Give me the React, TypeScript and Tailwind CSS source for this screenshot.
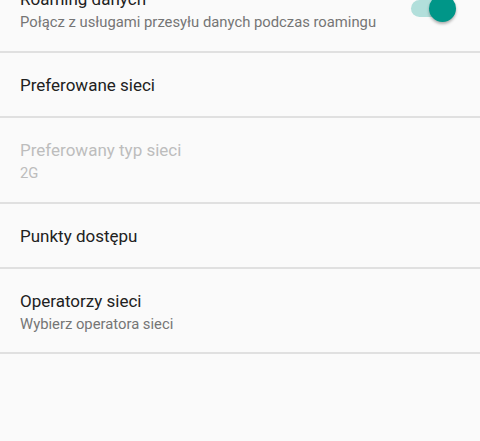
export default function App() {
  const Divider = () => <div className="h-[2px] bg-[#e0e0e0]" />;
  return (
    <div className="w-[480px] h-[441px] overflow-hidden bg-[#fafafa]" style={{ fontFamily: "Roboto, sans-serif" }}>
      <div className="-mt-[33px]">
        <div className="h-[84px] flex items-start pl-5 pr-6">
          <div className="flex-1 h-full flex flex-col justify-center pt-[3px]">
            <div className="text-[17px] leading-[22px] text-[#212121]">Roaming danych</div>
            <div className="mt-[1px] text-[14.8px] leading-[22px] text-[#757575]">Połącz z usługami przesyłu danych podczas roamingu</div>
          </div>
          <div className="relative w-[46px] h-[28px] mt-[28px]">
            <div className="absolute left-[1px] top-[5px] w-[40px] h-[17px] rounded-full bg-[#b2dfdb]" />
            <div className="absolute left-[19px] top-0 w-[27px] h-[27px] rounded-full bg-[#009688] shadow-[0_2px_3px_rgba(0,0,0,0.3)]" />
          </div>
        </div>
        <Divider />
        <div className="h-[63px] flex items-center px-5 pt-[2px]">
          <div className="text-[17px] text-[#212121]">Preferowane sieci</div>
        </div>
        <Divider />
        <div className="h-[84px] flex flex-col justify-center px-5 pt-[3px]">
          <div className="text-[17px] leading-[22px] text-[#bdbdbd]">Preferowany typ sieci</div>
          <div className="mt-[1px] text-[14.8px] leading-[22px] text-[#bdbdbd]">2G</div>
        </div>
        <Divider />
        <div className="h-[63px] flex items-center px-5 pt-[2px]">
          <div className="text-[17px] text-[#212121]">Punkty dostępu</div>
        </div>
        <Divider />
        <div className="h-[83px] flex flex-col justify-center px-5 pt-[3px]">
          <div className="text-[17px] leading-[22px] text-[#212121]">Operatorzy sieci</div>
          <div className="mt-[1px] text-[14.8px] leading-[22px] text-[#757575]">Wybierz operatora sieci</div>
        </div>
        <Divider />
      </div>
    </div>
  );
}
